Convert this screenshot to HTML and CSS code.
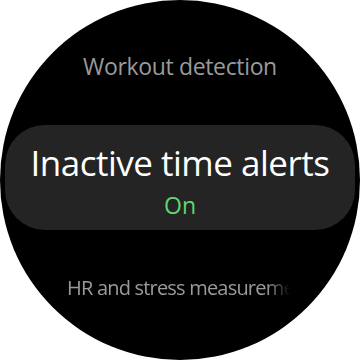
FILE: index.html
```html
<!DOCTYPE html>
<html>
<head>
<meta charset="utf-8">
<link rel="stylesheet" href="styles.css">
</head>
<body>
<div class="watch">
  <div class="item dim">Workout detection</div>
  <div class="pill">
    <div class="title">Inactive time alerts</div>
    <div class="status">On</div>
  </div>
  <div class="marquee"><span class="item dim small">HR and stress measurements</span></div>
</div>
</body>
</html>
```
FILE: styles.css
```css
html, body {
  margin: 0;
  padding: 0;
  background: #ffffff;
}
.watch {
  width: 360px;
  height: 360px;
  border-radius: 50%;
  background: #000;
  overflow: hidden;
  display: flex;
  flex-direction: column;
  align-items: center;
  box-sizing: border-box;
  padding-top: 51px;
  font-family: "Open Sans", "Noto Sans", sans-serif;
}
.item {
  font-size: 23px;
  line-height: 30px;
  letter-spacing: -0.35px;
  white-space: nowrap;
}
.dim {
  color: #9a9a9a;
}
.pill {
  align-self: stretch;
  margin: 44px 5px 0;
  height: 105px;
  box-sizing: border-box;
  padding: 17px 0 11px;
  background: #242424;
  border-radius: 40px;
  display: flex;
  flex-direction: column;
  align-items: center;
}
.title {
  color: #ffffff;
  font-size: 35px;
  line-height: 42px;
  letter-spacing: -0.5px;
  white-space: nowrap;
}
.status {
  margin-top: 7px;
  color: #62d46e;
  font-size: 23px;
  line-height: 28px;
}
.marquee {
  align-self: flex-start;
  margin-top: 44px;
  margin-left: 67px;
  width: 223px;
  overflow: hidden;
  white-space: nowrap;
  -webkit-mask-image: linear-gradient(to right, #000 0, #000 200px, transparent 223px);
  mask-image: linear-gradient(to right, #000 0, #000 200px, transparent 223px);
}
.small {
  font-size: 20px;
  line-height: 28px;
  letter-spacing: -0.8px;
}
```
